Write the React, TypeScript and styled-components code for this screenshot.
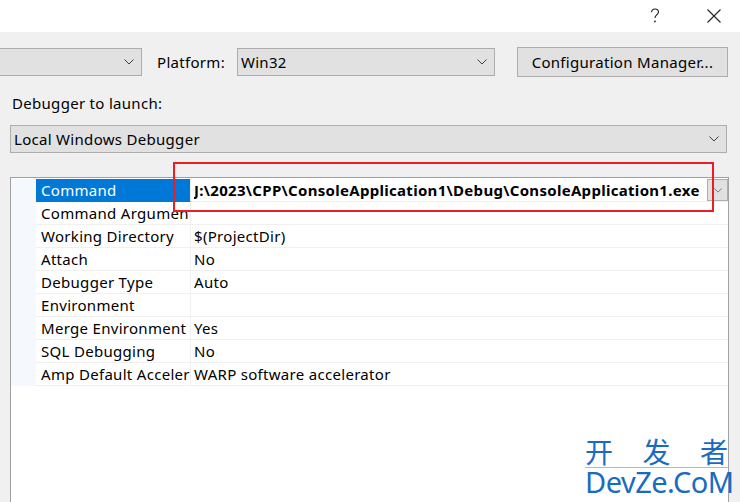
import React from "react";
import styled, { createGlobalStyle } from "styled-components";

interface Property {
  name: string;
  value: string;
}

const properties: Property[] = [
  { name: "Command", value: "J:\\2023\\CPP\\ConsoleApplication1\\Debug\\ConsoleApplication1.exe" },
  { name: "Command Arguments", value: "" },
  { name: "Working Directory", value: "$(ProjectDir)" },
  { name: "Attach", value: "No" },
  { name: "Debugger Type", value: "Auto" },
  { name: "Environment", value: "" },
  { name: "Merge Environment", value: "Yes" },
  { name: "SQL Debugging", value: "No" },
  { name: "Amp Default Accelerator", value: "WARP software accelerator" },
];

const GlobalStyle = createGlobalStyle`
  html, body {
    margin: 0;
    padding: 0;
    background: #f0f0f0;
  }
  body {
    font-family: "Noto Sans", "Open Sans", sans-serif;
    font-size: 15px;
    letter-spacing: 0.3px;
    color: #000;
  }
`;

const Window = styled.div`
  position: relative;
  width: 740px;
  height: 502px;
  overflow: hidden;
  display: flex;
  flex-direction: column;
  background: #f0f0f0;
`;

const TitleBar = styled.div`
  height: 32px;
  flex-shrink: 0;
  background: #ffffff;
  display: flex;
  justify-content: flex-end;
  align-items: center;
  padding-right: 19px;
  gap: 47px;
`;

const TitleIcon = styled.svg`
  display: block;
`;

const Body = styled.div`
  flex: 1;
  display: flex;
  flex-direction: column;
`;

const TopRow = styled.div`
  display: flex;
  align-items: center;
  height: 30px;
  margin-top: 15px;
`;

const Select = styled.div<{ $width: number; $noLeft?: boolean; $ml?: number }>`
  box-sizing: border-box;
  width: ${(p) => p.$width}px;
  height: 28px;
  margin-left: ${(p) => p.$ml ?? 0}px;
  background: #e1e1e1;
  border: 1px solid #adadad;
  border-left: ${(p) => (p.$noLeft ? "none" : "1px solid #adadad")};
  display: flex;
  align-items: center;
  justify-content: space-between;
  padding: 0 7px 0 3px;
  flex-shrink: 0;
`;

const SelectText = styled.span`
  white-space: nowrap;
  line-height: 1;
`;

const Label = styled.span<{ $ml?: number }>`
  margin-left: ${(p) => p.$ml ?? 0}px;
  white-space: nowrap;
`;

const Button = styled.div`
  box-sizing: border-box;
  width: 211px;
  height: 30px;
  margin-left: 22px;
  background: #e1e1e1;
  border: 1px solid #adadad;
  display: flex;
  align-items: center;
  justify-content: center;
  white-space: nowrap;
`;

const SectionLabel = styled.div`
  margin: 15px 0 0 12px;
  height: 22px;
  line-height: 22px;
`;

const WideSelectRow = styled.div`
  margin: 11px 0 0 10px;
`;

const Grid = styled.div`
  box-sizing: border-box;
  margin: 24px 0 0 10px;
  width: 719px;
  flex: 1;
  background: #ffffff;
  border: 1px solid #a0a0a0;
  border-bottom: none;
  padding-top: 1px;
  display: flex;
  flex-direction: column;
`;

const GridRow = styled.div`
  display: flex;
  height: 23px;
`;

const Gutter = styled.div`
  width: 25px;
  flex-shrink: 0;
  background: #f5f8fc;
`;

const NameCell = styled.div<{ $selected?: boolean }>`
  box-sizing: border-box;
  width: 155px;
  flex-shrink: 0;
  padding-left: 5px;
  line-height: 22px;
  white-space: nowrap;
  overflow: hidden;
  background: ${(p) => (p.$selected ? "#0078d7" : "#ffffff")};
  color: ${(p) => (p.$selected ? "#ffffff" : "#000000")};
  border-bottom: 1px solid ${(p) => (p.$selected ? "#0078d7" : "#f0f0f0")};
  border-right: 1px solid #f0f0f0;
`;

const ValueCell = styled.div<{ $bold?: boolean }>`
  box-sizing: border-box;
  flex: 1;
  min-width: 0;
  display: flex;
  align-items: center;
  justify-content: space-between;
  padding-left: 3px;
  line-height: 22px;
  white-space: nowrap;
  font-weight: ${(p) => (p.$bold ? 700 : 400)};
  border-bottom: 1px solid #f0f0f0;
`;

const ValueText = styled.span`
  overflow: hidden;
`;

const CellDrop = styled.div`
  box-sizing: border-box;
  width: 21px;
  height: 22px;
  flex-shrink: 0;
  align-self: flex-start;
  background: #e1e1e1;
  border: 1px solid #adadad;
  display: flex;
  align-items: center;
  justify-content: center;
`;

const Highlight = styled.div`
  position: absolute;
  left: 173px;
  top: 162px;
  width: 541px;
  height: 50px;
  box-sizing: border-box;
  border: 2px solid #ee1c25;
  pointer-events: none;
`;

const Watermark = styled.div`
  position: absolute;
  left: 585px;
  top: 436px;
  width: 143px;
  color: #1a6bbf;
  display: flex;
  flex-direction: column;
  pointer-events: none;
  letter-spacing: 0;
`;

const WatermarkCn = styled.div`
  display: flex;
  justify-content: space-between;
  font-family: "Noto Sans CJK SC", sans-serif;
  font-size: 28px;
  line-height: 31px;
  border-bottom: 1px solid #8cc4ee;
`;

const WatermarkEn = styled.div`
  font-family: "Noto Sans", sans-serif;
  font-size: 29px;
  line-height: 28px;
  letter-spacing: -0.5px;
  white-space: nowrap;
`;

const Chevron = ({ size = 10, color = "#404040" }: { size?: number; color?: string }) => (
  <svg width={size} height={size / 2 + 1} viewBox="0 0 10 6">
    <path d="M0.5 0.5 L5 5 L9.5 0.5" fill="none" stroke={color} strokeWidth="1" />
  </svg>
);

export default function App() {
  return (
    <>
      <GlobalStyle />
      <Window>
        <TitleBar>
          <TitleIcon width="10" height="16" viewBox="0 0 10 16">
            <path
              d="M1.5 4.2 C1.8 1.8 3.4 1 5 1 C7 1 8.5 2.3 8.5 4.1 C8.5 5.6 7.6 6.3 6.4 7.2 C5.4 7.9 5 8.6 5 10"
              fill="none"
              stroke="#222"
              strokeWidth="1.1"
            />
            <circle cx="5" cy="13.4" r="0.9" fill="#222" />
          </TitleIcon>
          <TitleIcon width="14" height="14" viewBox="0 0 14 14">
            <path d="M0.5 0.5 L13.5 13.5 M13.5 0.5 L0.5 13.5" stroke="#222" strokeWidth="1.1" />
          </TitleIcon>
        </TitleBar>
        <Body>
          <TopRow>
            <Select $width={142} $noLeft>
              <SelectText />
              <Chevron />
            </Select>
            <Label $ml={15}>Platform:</Label>
            <Select $width={258} $ml={12}>
              <SelectText>Win32</SelectText>
              <Chevron />
            </Select>
            <Button>Configuration Manager...</Button>
          </TopRow>
          <SectionLabel>Debugger to launch:</SectionLabel>
          <WideSelectRow>
            <Select $width={717}>
              <SelectText>Local Windows Debugger</SelectText>
              <Chevron />
            </Select>
          </WideSelectRow>
          <Grid>
            {properties.map((p, i) => (
              <GridRow key={p.name}>
                <Gutter />
                <NameCell $selected={i === 0}>{p.name}</NameCell>
                <ValueCell $bold={i === 0}>
                  <ValueText>{p.value}</ValueText>
                  {i === 0 && (
                    <CellDrop>
                      <Chevron size={8} color="#606060" />
                    </CellDrop>
                  )}
                </ValueCell>
              </GridRow>
            ))}
          </Grid>
        </Body>
        <Highlight />
        <Watermark>
          <WatermarkCn>
            <span>开</span>
            <span>发</span>
            <span>者</span>
          </WatermarkCn>
          <WatermarkEn>DevZe.CoM</WatermarkEn>
        </Watermark>
      </Window>
    </>
  );
}
